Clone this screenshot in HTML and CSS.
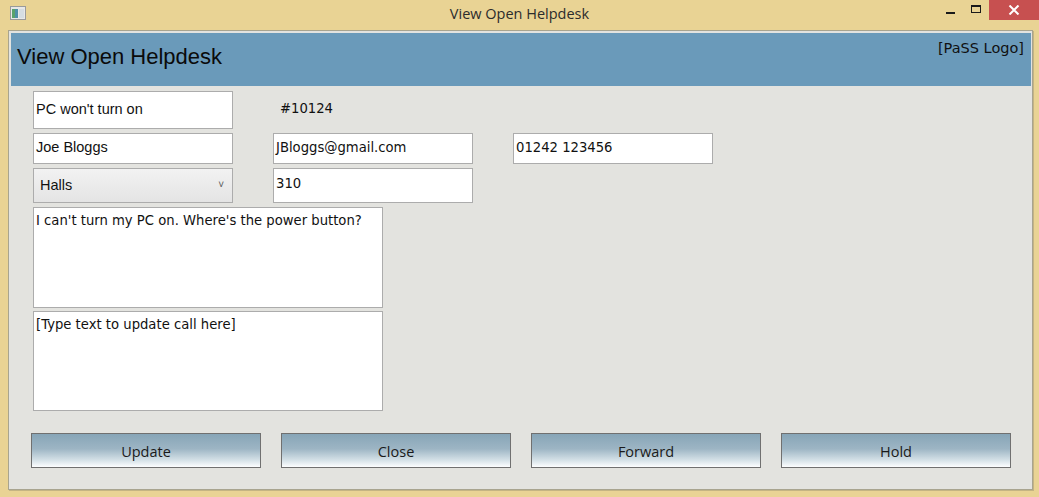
FILE: index.html
```html
<!DOCTYPE html>
<html>
<head>
<meta charset="utf-8">
<link rel="stylesheet" href="styles.css">
</head>
<body>
<div class="window">
  <div class="titlebar">
    <svg class="app-icon" width="16" height="14" viewBox="0 0 16 14">
      <rect x="0.5" y="0.5" width="15" height="13" fill="#e8e8e8" stroke="#9a9a9a"/>
      <rect x="2" y="3" width="6" height="9" fill="#4f8fa8"/>
      <rect x="2" y="3" width="3" height="9" fill="#5aa36c"/>
      <rect x="9" y="3" width="5" height="9" fill="#d6dde2"/>
    </svg>
    <div class="title">View Open Helpdesk</div>
    <div class="controls">
      <div class="ctl ctl-min"><span class="min-bar"></span></div>
      <div class="ctl ctl-max"><span class="max-box"></span></div>
      <div class="ctl ctl-close">
        <svg width="12" height="10" viewBox="0 0 12 10"><path d="M1.5 0.5 L10.5 9.5 M10.5 0.5 L1.5 9.5" stroke="#fff" stroke-width="2"/></svg>
      </div>
    </div>
  </div>
  <div class="client">
    <div class="header">
      <h1 class="header-title">View Open Helpdesk</h1>
      <div class="logo">[PaSS Logo]</div>
    </div>
    <div class="form">
      <div class="row row-1">
        <div class="field f-arial tall">PC won't turn on</div>
        <div class="label f-geo">#10124</div>
      </div>
      <div class="row row-2">
        <div class="field f-arial">Joe Bloggs</div>
        <div class="field f-geo">JBloggs@gmail.com</div>
        <div class="field f-geo">01242 123456</div>
      </div>
      <div class="row row-3">
        <div class="combo f-arial"><span>Halls</span><span class="chev">&#x2C5;</span></div>
        <div class="field f-geo mid">310</div>
      </div>
      <div class="area f-geo">I can't turn my PC on. Where's the power button?</div>
      <div class="area area-2 f-geo">[Type text to update call here]</div>
    </div>
    <div class="buttons">
      <button class="btn">Update</button>
      <button class="btn">Close</button>
      <button class="btn">Forward</button>
      <button class="btn">Hold</button>
    </div>
  </div>
</div>
</body>
</html>
```

FILE: styles.css
```css
* { box-sizing: border-box; }
html, body { margin: 0; padding: 0; }
body {
  width: 1039px;
  height: 497px;
  background: #e9d394;
  overflow: hidden;
  font-family: "Liberation Sans", Arial, sans-serif;
}
.window { display: flex; flex-direction: column; height: 497px; }
.titlebar {
  height: 30px;
  display: flex;
  align-items: flex-start;
  position: relative;
}
.app-icon { margin: 6px 0 0 10px; }
.title {
  position: absolute;
  left: 0; right: 0; top: 4px;
  text-align: center;
  font-family: "Open Sans", "Noto Sans", sans-serif;
  font-size: 14.5px;
  color: #2c2c2c;
}
.controls {
  margin-left: auto;
  display: flex;
  align-items: flex-start;
  position: relative;
}
.ctl { height: 20px; display: flex; align-items: center; justify-content: center; }
.ctl-min { width: 26px; }
.min-bar { display: block; width: 9px; height: 2px; background: #1a1a1a; margin-top: 5px; }
.ctl-max { width: 26px; }
.max-box { display: block; width: 10px; height: 8px; border: 1px solid #1a1a1a; border-top-width: 2px; margin-top: -3px; }
.ctl-close { width: 50px; background: #c75050; }

.client {
  margin: 0 6px 0 8px;
  height: 460px;
  border: 1px solid #a8a48f;
  background: #e3e3df;
  padding: 2px 1px 0 2px;
  display: flex;
  flex-direction: column;
  box-shadow: 1px 1px 0 #c4b483;
}
.header {
  height: 53px;
  background: #6a9aba;
  display: flex;
  justify-content: space-between;
  align-items: flex-start;
  padding: 0 7px 0 6px;
}
.header-title {
  margin: 11px 0 0 0;
  font-weight: normal;
  font-size: 22px;
  color: #0a0a0a;
}
.logo {
  margin-top: 7px;
  font-family: "DejaVu Sans", sans-serif;
  font-size: 14.5px;
  color: #111;
}
.form {
  padding: 5px 0 0 22px;
  display: flex;
  flex-direction: column;
  gap: 4px;
}
.row { display: grid; grid-template-columns: 200px 200px 200px; column-gap: 40px; align-items: center; }
.f-arial { font-family: "Liberation Sans", Arial, sans-serif; font-size: 14.5px; }
.f-geo { font-family: "DejaVu Sans", sans-serif; font-size: 13.2px; }
.field {
  height: 31px;
  background: #fff;
  border: 1px solid #acacac;
  padding: 0 3px 0 2px;
  display: flex;
  align-items: center;
  color: #111;
  padding-bottom: 3px;
}
.field.tall { height: 38px; }
.field.mid { height: 35px; align-items: flex-start; padding-top: 7px; }
.label { padding-left: 7px; color: #111; padding-bottom: 4px; }
.combo {
  height: 35px;
  border: 1px solid #acacac;
  background: linear-gradient(#f2f2f2, #e4e4e4);
  display: flex;
  align-items: center;
  justify-content: space-between;
  padding: 0 8px 2px 6px;
  color: #111;
}
.chev { font-size: 10px; color: #555; }
.area {
  width: 350px;
  height: 101px;
  background: #fff;
  border: 1px solid #acacac;
  padding: 5px 3px 5px 2px;
  color: #111;
  line-height: 16px;
}
.area-2 { height: 100px; margin-top: -1px; }
.buttons {
  display: flex;
  gap: 20px;
  padding: 22px 0 0 20px;
}
.btn {
  width: 230px;
  height: 35px;
  border: 1px solid #707070;
  background: linear-gradient(#87a5b7 0%, #9db5c4 45%, #d6e2e8 80%, #fdfeff 100%);
  font-family: "Open Sans", "Noto Sans", sans-serif;
  font-size: 14.5px;
  color: #1a1a1a;
  padding: 1px 0 0 0;
}
```
